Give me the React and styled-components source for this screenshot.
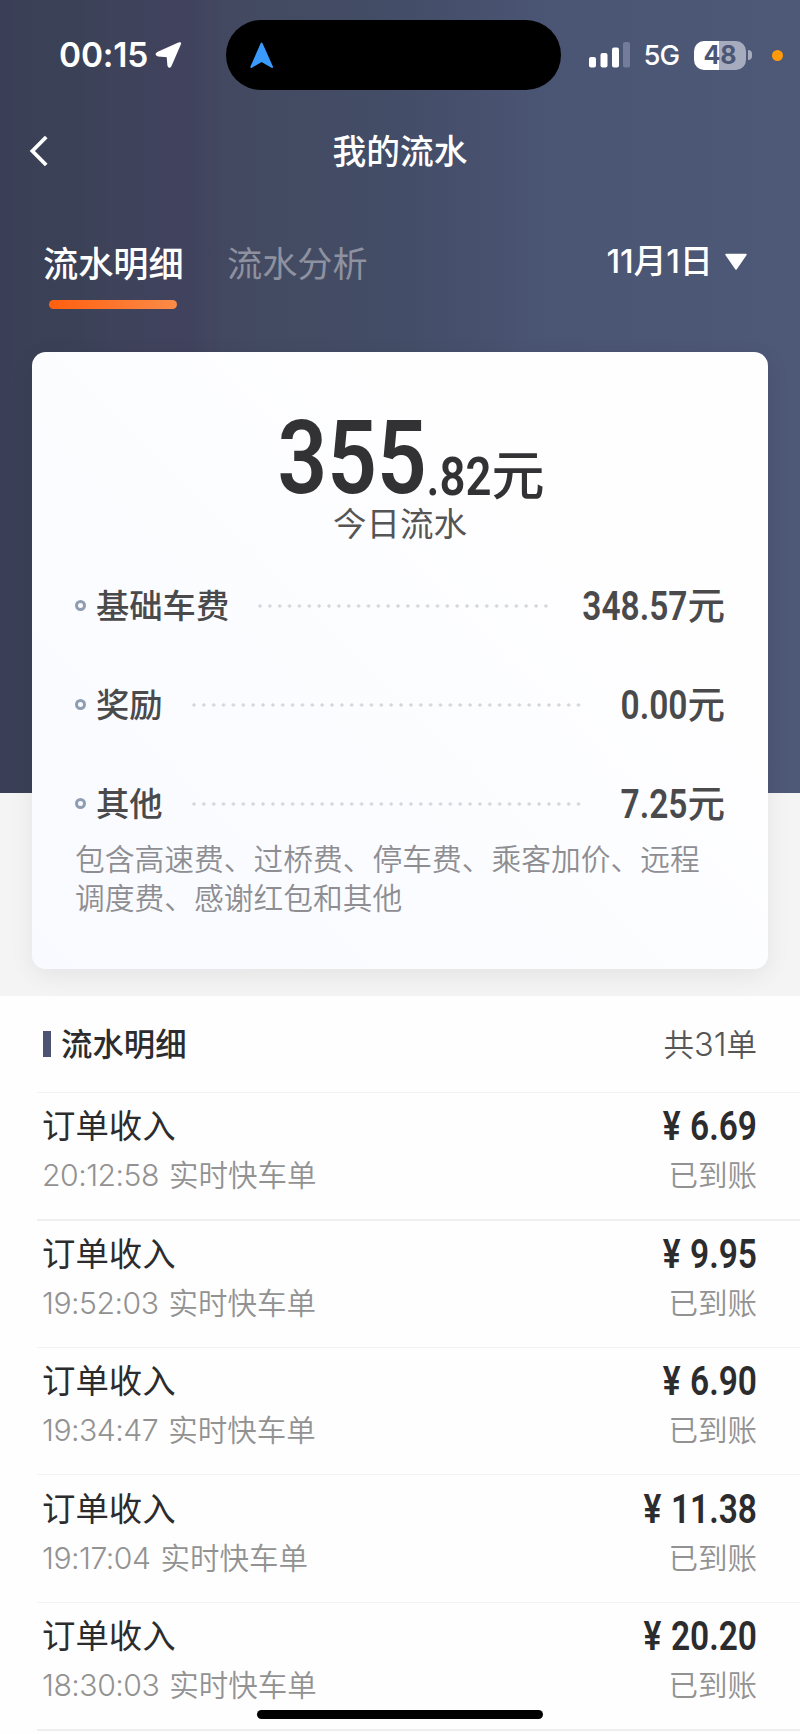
import React from 'react'
import styled, { createGlobalStyle } from 'styled-components'

const fees = [
    { label: '基础车费', value: '348.57', gap: 31 },
    { label: '奖励', value: '0.00', gap: 39 },
    { label: '其他', value: '7.25', gap: 39 },
]

const orders = [
    { time: '20:12:58', amount: '6.69' },
    { time: '19:52:03', amount: '9.95' },
    { time: '19:34:47', amount: '6.90' },
    { time: '19:17:04', amount: '11.38' },
    { time: '18:30:03', amount: '20.20' },
]

const StatusBar = () => (
    <StatusRow>
        <StatusLeft>
            <Clock>00:15</Clock>
            <svg width="27" height="27" viewBox="0 0 27 27">
                <path d="M25 1.8 15.6 23.6 Q14.2 25.8 13.4 23.4 L12.6 14.2 3 13.4 Q.4 12.4 2.6 11 L23.8 1.4 Q25.6 .8 25 1.8Z" fill="#fff" stroke="#fff" strokeWidth="2" strokeLinejoin="round" />
            </svg>
        </StatusLeft>
        <Island>
            <svg width="24" height="27" viewBox="0 0 24 27">
                <path d="M11.6 1.6 22 25 11.6 18.8 1.4 25Z" fill="#3a9bfc" stroke="#3a9bfc" strokeWidth="2" strokeLinejoin="round" />
            </svg>
        </Island>
        <StatusRight>
            <svg width="41" height="26" viewBox="0 0 41 26">
                <rect x="0" y="15" width="7" height="10.5" rx="2" fill="#fff" />
                <rect x="11.5" y="11" width="7" height="14.5" rx="2" fill="#fff" />
                <rect x="23" y="5.5" width="7" height="20" rx="2" fill="#fff" />
                <rect x="34" y="0" width="7" height="25.5" rx="2" fill="#737d9b" />
            </svg>
            <Network>5G</Network>
            <Battery>48</Battery>
            <BatteryTip />
            <MicDot />
        </StatusRight>
    </StatusRow>
)

const App = () => {
    return (
        <Page>
            <GlobalStyle />
            <Top>
                <StatusBar />
                <NavBar>
                    <svg width="20" height="32" viewBox="0 0 20 32">
                        <path d="M18.2 2 4.4 16 18.2 30" fill="none" stroke="#fff" strokeWidth="3.8" />
                    </svg>
                    <NavTitle>我的流水</NavTitle>
                </NavBar>
                <Tabs>
                    <Tab $active>流水明细</Tab>
                    <Tab>流水分析</Tab>
                    <DatePick>
                        <DateText>11月1日</DateText>
                        <svg width="24" height="18" viewBox="0 0 24 18">
                            <path d="M2 1.5H22L12 16Z" fill="#fff" stroke="#fff" strokeWidth="1.5" strokeLinejoin="round" />
                        </svg>
                    </DatePick>
                </Tabs>
                <Card>
                    <Total>
                        <TotalInt>355</TotalInt>
                        <TotalDec>.82</TotalDec>
                        <TotalUnit>元</TotalUnit>
                    </Total>
                    <TotalLabel>今日流水</TotalLabel>
                    {fees.map((fee) => (
                        <FeeRow key={fee.label}>
                            <Ring />
                            <FeeLabel>{fee.label}</FeeLabel>
                            <Leader $gap={fee.gap} />
                            <Digits $color="#4a4a4c">{fee.value}</Digits>
                            <FeeUnit>元</FeeUnit>
                        </FeeRow>
                    ))}
                    <Note>包含高速费、过桥费、停车费、乘客加价、远程调度费、感谢红包和其他</Note>
                </Card>
            </Top>
            <ListHead>
                <Mark />
                <ListTitle>流水明细</ListTitle>
                <Count>共<i>31</i>单</Count>
            </ListHead>
            {orders.map((order, i) => (
                <Order key={order.time} $strong={i === 1}>
                    <Line>
                        <OrderName>订单收入</OrderName>
                        <Digits $color="#2c2c2e"><Yen>¥</Yen>{order.amount}</Digits>
                    </Line>
                    <SubLine>
                        <span><Time>{order.time}</Time>实时快车单</span>
                        <span>已到账</span>
                    </SubLine>
                </Order>
            ))}
            <EndLine />
            <HomeBar />
        </Page>
    )
}

export default App

const GlobalStyle = createGlobalStyle`
*{
    box-sizing:border-box;
}
body{
    margin:0;
    background:#fff;
}
svg{
    display:block;
    flex:none;
}
`

const Page = styled.div`
    position:relative;
    width:800px;
    height:1734px;
    overflow:hidden;
    background:#fefefe;
    font-family:"Noto Sans CJK SC", sans-serif;
    white-space:nowrap;
`

const Top = styled.div`
    height:996px;
    padding-top:20px;
    overflow:hidden;
    background:linear-gradient(90deg, #3a3e56 0, #3a4056 18px, #3b4257 80px, #3f425b 120px, #41435e 190px, #42485f 220px, #434b62 280px, #434d67 400px, #4a5473 530px, #4e5877 100%) 0 0 / 100% 793px no-repeat #f4f4f4;
`

const StatusRow = styled.div`
    display:flex;
    align-items:center;
    height:70px;
    color:#fff;
    font-family:Inter, sans-serif;
`

const StatusLeft = styled.div`
    display:flex;
    align-items:center;
    gap:7px;
    width:226px;
    padding-left:59px;
`

const Clock = styled.div`
    width:89px;
    font-size:33.5px;
    font-weight:600;
    letter-spacing:-0.2px;
`

const Island = styled.div`
    display:flex;
    align-items:center;
    width:335px;
    height:70px;
    padding-left:24px;
    border-radius:35px;
    background:#000;
`

const StatusRight = styled.div`
    display:flex;
    align-items:center;
    padding-left:28px;
`

const Network = styled.div`
    width:50.5px;
    margin-left:13.5px;
    font-size:27.5px;
    font-weight:450;
    letter-spacing:-1px;
`

const Battery = styled.div`
    width:52px;
    height:29px;
    border-radius:10px;
    background:linear-gradient(90deg, #fff 49%, #a6abbd 49%);
    color:#4b5574;
    font-size:25px;
    font-weight:700;
    line-height:29px;
    text-align:center;
`

const BatteryTip = styled.div`
    width:4px;
    height:10px;
    margin-left:2px;
    border-radius:0 5px 5px 0;
    background:#a6abbd;
`

const MicDot = styled.div`
    width:11px;
    height:11px;
    margin-left:20px;
    border-radius:50%;
    background:#ff9a0a;
`

const NavBar = styled.div`
    display:grid;
    grid-template-columns:100px 1fr 100px;
    align-items:center;
    height:122px;
    svg{
        margin-left:28px;
    }
`

const NavTitle = styled.div`
    padding-bottom:3px;
    color:#fff;
    font-size:33.7px;
    font-weight:500;
    line-height:50px;
    text-align:center;
`

const Tabs = styled.div`
    display:flex;
    height:140px;
    padding:25px 52px 0 43px;
`

const Tab = styled.div`
    width:140px;
    margin-right:44px;
    color:${(props) => (props.$active ? '#fff' : '#8e919f')};
    font-size:35.2px;
    font-weight:${(props) => (props.$active ? 500 : 400)};
    line-height:50px;
    &::after{
        content:"";
        display:${(props) => (props.$active ? 'block' : 'none')};
        width:128px;
        height:9px;
        margin:13px 0 0 6px;
        border-radius:5px;
        background:linear-gradient(90deg, #ff5f0f, #fb8b48);
    }
`

const DatePick = styled.div`
    display:flex;
    align-items:center;
    gap:11.5px;
    height:50px;
    margin-left:auto;
`

const DateText = styled.div`
    padding-bottom:6px;
    color:#fff;
    font-family:Inter, "Noto Sans CJK SC", sans-serif;
    font-size:33px;
    font-weight:500;
    letter-spacing:-0.2px;
`

const Card = styled.div`
    width:736px;
    height:617px;
    margin:0 auto;
    padding:0 43px;
    border-radius:14px;
    background:linear-gradient(45deg, #f8faff, #fefeff 70%);
    box-shadow:0 6px 24px rgba(0, 0, 0, 0.07);
`

const Total = styled.div`
    display:flex;
    align-items:baseline;
    justify-content:center;
    height:155px;
    padding:69.5px 0 0 22px;
    color:#323234;
    font-family:Roboto, sans-serif;
    line-height:1;
`

/* digits are stretched from their baseline to get the tall narrow look */
const TotalInt = styled.span`
    font-size:87px;
    font-weight:650;
    transform:translateY(-2px) scaleY(1.18);
    transform-origin:50% 84%;
`

const TotalDec = styled.span`
    font-size:45.5px;
    font-weight:600;
    transform:scaleY(1.18);
    transform-origin:50% 84%;
`

const TotalUnit = styled.span`
    font-family:"Noto Sans CJK SC", sans-serif;
    font-size:53px;
    font-weight:500;
`

const TotalLabel = styled.div`
    height:49px;
    color:#555;
    font-size:33.5px;
    line-height:29px;
    text-align:center;
`

const FeeRow = styled.div`
    display:flex;
    align-items:center;
    height:99px;
    color:#4a4a4c;
`

const Ring = styled.div`
    width:11px;
    height:11px;
    margin-right:10px;
    border:3px solid #8f9db3;
    border-radius:50%;
`

const FeeLabel = styled.div`
    padding-bottom:3px;
    font-size:33.3px;
    font-weight:450;
    line-height:50px;
`

const Leader = styled.div`
    flex:1;
    height:4px;
    margin:0 ${(props) => props.$gap}px 0 29px;
    background:radial-gradient(circle at 2px 2px, #d3d5da 1.3px, transparent 2px) 0 0 / 9.87px 4px repeat-x;
`

const Digits = styled.span`
    padding-top:1px;
    color:${(props) => props.$color};
    font-family:Roboto, sans-serif;
    font-size:33.5px;
    font-weight:570;
    line-height:35px;
    transform:scaleY(1.19);
`

const FeeUnit = styled.span`
    padding-bottom:5px;
    font-size:37.5px;
    font-weight:500;
    line-height:50px;
`

const Note = styled.div`
    width:630px;
    margin-top:-15px;
    color:#8e8e92;
    font-size:29.75px;
    font-weight:350;
    line-height:38.9px;
    white-space:normal;
`

const ListHead = styled.div`
    display:flex;
    align-items:center;
    height:95.5px;
    padding:0 43px;
`

const Mark = styled.div`
    width:8px;
    height:26px;
    margin-right:10px;
    background:#4b5272;
`

const ListTitle = styled.div`
    flex:1;
    padding-bottom:2px;
    color:#2c2c2e;
    font-size:31.4px;
    font-weight:500;
`

const Count = styled.div`
    padding-bottom:1px;
    color:#555;
    font-size:30.5px;
    font-weight:350;
    i{
        font-family:Inter, sans-serif;
        font-size:32.5px;
        font-style:normal;
        font-weight:350;
    }
`

const Order = styled.div`
    height:127.5px;
    margin-left:37px;
    padding:7.5px 43px 0 5px;
    border-top:${(props) => (props.$strong ? '2px solid #eee' : '1px solid #f3f3f3')};
    ${(props) => props.$strong && 'padding-top:6.5px;'}
`

const Line = styled.div`
    display:flex;
    align-items:center;
    justify-content:space-between;
    height:50px;
    ${Digits}{
        padding-top:3px;
    }
`

const OrderName = styled.span`
    padding-bottom:3px;
    color:#2c2c2e;
    font-size:33.4px;
    font-weight:400;
`

const Yen = styled.span`
    margin-right:9.5px;
`

const SubLine = styled.div`
    display:flex;
    align-items:center;
    justify-content:space-between;
    height:46px;
    color:#929292;
    font-size:29.5px;
    font-weight:330;
`

const Time = styled.span`
    margin-right:10px;
    font-family:Inter, sans-serif;
    font-size:30.2px;
    letter-spacing:-0.5px;
`

const EndLine = styled.div`
    height:2px;
    margin-left:37px;
    background:#eee;
`

const HomeBar = styled.div`
    position:absolute;
    left:257px;
    bottom:15px;
    width:286px;
    height:9px;
    border-radius:5px;
    background:#000;
`
